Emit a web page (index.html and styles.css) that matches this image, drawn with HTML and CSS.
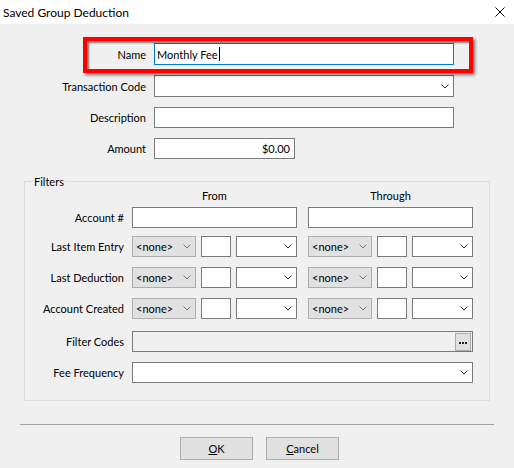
FILE: index.html
```html
<!DOCTYPE html>
<html lang="en">
<head>
    <meta charset="UTF-8">
    <title>Saved Group Deduction</title>
    <link rel="stylesheet" href="styles.css">
</head>
<body>
    <div class="dialog">
        <div class="titlebar">
            <span class="title">Saved Group Deduction</span>
            <svg class="close" width="10" height="10" viewBox="0 0 10 10">
                <path d="M0.5 0.5 L9.5 9.5 M9.5 0.5 L0.5 9.5" stroke="#000" stroke-width="1" fill="none"/>
            </svg>
        </div>

        <div class="fields">
            <div class="row highlight">
                <label>Name</label>
                <div class="input focus">Monthly Fee<span class="caret"></span></div>
            </div>
            <div class="row">
                <label>Transaction Code</label>
                <div class="input select">
                    <svg class="chev" width="8" height="5" viewBox="0 0 8 5"><path d="M0.5 0.5 L4 4 L7.5 0.5" fill="none" stroke="#333"/></svg>
                </div>
            </div>
            <div class="row">
                <label>Description</label>
                <div class="input short"></div>
            </div>
            <div class="row">
                <label>Amount</label>
                <div class="input short amount">$0.00</div>
            </div>
        </div>

        <fieldset class="filters">
            <legend>Filters</legend>

            <div class="frow head">
                <span class="flabel"></span>
                <span class="from">From</span>
                <span class="through">Through</span>
            </div>

            <div class="frow first">
                <span class="flabel">Account #</span>
                <div class="from"><div class="box"></div></div>
                <div class="through"><div class="box"></div></div>
            </div>

            <!-- date range rows: operator combo, amount, unit -->
            <div class="frow range">
                <span class="flabel">Last Item Entry</span>
                <div class="from">
                    <div class="combo">&lt;none&gt;<svg class="chev" width="8" height="5" viewBox="0 0 8 5"><path d="M0.5 0.5 L4 4 L7.5 0.5" fill="none" stroke="#777"/></svg></div>
                    <div class="box num"></div>
                    <div class="box select"><svg class="chev" width="8" height="5" viewBox="0 0 8 5"><path d="M0.5 0.5 L4 4 L7.5 0.5" fill="none" stroke="#333"/></svg></div>
                </div>
                <div class="through">
                    <div class="combo">&lt;none&gt;<svg class="chev" width="8" height="5" viewBox="0 0 8 5"><path d="M0.5 0.5 L4 4 L7.5 0.5" fill="none" stroke="#777"/></svg></div>
                    <div class="box num"></div>
                    <div class="box select"><svg class="chev" width="8" height="5" viewBox="0 0 8 5"><path d="M0.5 0.5 L4 4 L7.5 0.5" fill="none" stroke="#333"/></svg></div>
                </div>
            </div>

            <div class="frow">
                <span class="flabel">Last Deduction</span>
                <div class="from">
                    <div class="combo">&lt;none&gt;<svg class="chev" width="8" height="5" viewBox="0 0 8 5"><path d="M0.5 0.5 L4 4 L7.5 0.5" fill="none" stroke="#777"/></svg></div>
                    <div class="box num"></div>
                    <div class="box select"><svg class="chev" width="8" height="5" viewBox="0 0 8 5"><path d="M0.5 0.5 L4 4 L7.5 0.5" fill="none" stroke="#333"/></svg></div>
                </div>
                <div class="through">
                    <div class="combo">&lt;none&gt;<svg class="chev" width="8" height="5" viewBox="0 0 8 5"><path d="M0.5 0.5 L4 4 L7.5 0.5" fill="none" stroke="#777"/></svg></div>
                    <div class="box num"></div>
                    <div class="box select"><svg class="chev" width="8" height="5" viewBox="0 0 8 5"><path d="M0.5 0.5 L4 4 L7.5 0.5" fill="none" stroke="#333"/></svg></div>
                </div>
            </div>

            <div class="frow">
                <span class="flabel">Account Created</span>
                <div class="from">
                    <div class="combo">&lt;none&gt;<svg class="chev" width="8" height="5" viewBox="0 0 8 5"><path d="M0.5 0.5 L4 4 L7.5 0.5" fill="none" stroke="#777"/></svg></div>
                    <div class="box num"></div>
                    <div class="box select"><svg class="chev" width="8" height="5" viewBox="0 0 8 5"><path d="M0.5 0.5 L4 4 L7.5 0.5" fill="none" stroke="#333"/></svg></div>
                </div>
                <div class="through">
                    <div class="combo">&lt;none&gt;<svg class="chev" width="8" height="5" viewBox="0 0 8 5"><path d="M0.5 0.5 L4 4 L7.5 0.5" fill="none" stroke="#777"/></svg></div>
                    <div class="box num"></div>
                    <div class="box select"><svg class="chev" width="8" height="5" viewBox="0 0 8 5"><path d="M0.5 0.5 L4 4 L7.5 0.5" fill="none" stroke="#333"/></svg></div>
                </div>
            </div>

            <div class="frow codes">
                <span class="flabel">Filter Codes</span>
                <div class="box wide readonly">
                    <span class="ellipsis">
                        <svg width="8" height="2" viewBox="0 0 8 2"><rect x="0" y="0" width="2" height="2" fill="#222"/><rect x="3" y="0" width="2" height="2" fill="#222"/><rect x="6" y="0" width="2" height="2" fill="#222"/></svg>
                    </span>
                </div>
            </div>

            <div class="frow">
                <span class="flabel">Fee Frequency</span>
                <div class="box wide select"><svg class="chev" width="8" height="5" viewBox="0 0 8 5"><path d="M0.5 0.5 L4 4 L7.5 0.5" fill="none" stroke="#333"/></svg></div>
            </div>
        </fieldset>

        <div class="separator"></div>

        <div class="buttons">
            <button class="btn"><u>O</u>K</button>
            <button class="btn"><u>C</u>ancel</button>
        </div>
    </div>
</body>
</html>
```

FILE: styles.css
```css
*, *::before, *::after {
    box-sizing: border-box;
}
body {
    margin: 0;
    font-family: "Segoe UI", Lato, sans-serif;
    font-size: 11px;
    color: #000;
    background: #f0f0f0;
}
.dialog {
    width: 514px;
    height: 468px;
    background: #f0f0f0;
}
.titlebar {
    height: 24px;
    background: #fff;
    display: flex;
    align-items: center;
    justify-content: space-between;
    padding: 0 9px 0 3px;
}
.title {
    font-size: 12px;
}

/* top fields */
.fields {
    display: flex;
    flex-direction: column;
    gap: 10px;
    padding-top: 19px;
}
.row {
    display: flex;
    align-items: center;
    gap: 8px;
}
.row > label {
    width: 146px;
    text-align: right;
}
.input {
    width: 300px;
    height: 22px;
    background: #fff;
    border: 1px solid #7a7a7a;
    display: flex;
    align-items: center;
    padding: 0 3px;
}
.input.short {
    height: 21px;
}
.input.focus {
    border-color: #0078d7;
    padding-left: 2px;
}
.caret {
    display: inline-block;
    width: 1px;
    height: 14px;
    background: #000;
    margin-left: 1px;
}
.input.amount {
    width: 141px;
    justify-content: flex-end;
    padding-right: 4px;
}
.select {
    justify-content: flex-end;
    padding-right: 4px;
}
.chev {
    display: block;
}

/* red callout frame around the name field */
.highlight {
    position: relative;
}
.highlight::after {
    content: '';
    position: absolute;
    left: 83px;
    top: -6px;
    width: 390px;
    height: 36px;
    border: 4px solid #f00;
    box-shadow: 2px 2px 3px rgba(0,0,0,0.55), inset 2px 2px 2px rgba(0,0,0,0.5);
    pointer-events: none;
}

/* filters group */
.filters {
    margin: 15px 24px 0 24px;
    padding: 0 0 17px 0;
    border: 1px solid #dcdcdc;
    min-width: 0;
}
.filters legend {
    margin-left: 8px;
    padding: 0 1px;
    line-height: 15px;
}
.frow {
    display: flex;
    align-items: center;
    height: 21px;
    margin-top: 10px;
}
.frow.head {
    height: 15px;
    margin-top: 0;
}
.frow.head .from,
.frow.head .through {
    justify-content: center;
}
.frow.first {
    margin-top: 3px;
}
.frow.range {
    margin-top: 8px;
}
.frow.codes {
    margin-top: 12px;
}
.flabel {
    width: 99px;
    margin-right: 8px;
    text-align: right;
}
.from,
.through {
    width: 165px;
    height: 100%;
    display: flex;
    gap: 5px;
}
.through {
    margin-left: 11px;
}
.box {
    flex: 1;
    height: 21px;
    background: #fff;
    border: 1px solid #7a7a7a;
    display: flex;
    align-items: center;
}
.box.num {
    flex: 0 0 30px;
}
.box.select {
    flex: 0 0 61px;
}
.box.wide {
    flex: 0 0 341px;
}
.box.readonly {
    background: #f0f0f0;
    justify-content: flex-end;
    padding-right: 1px;
}
.ellipsis {
    width: 16px;
    height: 18px;
    background: #e1e1e1;
    border: 1px solid #adadad;
    display: flex;
    align-items: center;
    justify-content: center;
    padding-top: 3px;
}
.combo {
    flex: 0 0 64px;
    height: 21px;
    background: #e1e1e1;
    border: 1px solid #adadad;
    display: flex;
    align-items: center;
    justify-content: space-between;
    padding: 0 4px 0 3px;
}

/* footer */
.separator {
    margin: 23px 20px 0 20px;
    height: 1px;
    background: #a0a0a0;
}
.buttons {
    display: flex;
    justify-content: center;
    gap: 13px;
    padding-left: 5px;
    margin-top: 12px;
}
.btn {
    width: 73px;
    height: 23px;
    background: #e1e1e1;
    border: 1px solid #adadad;
    font: inherit;
    color: #000;
    padding: 0;
}
```
